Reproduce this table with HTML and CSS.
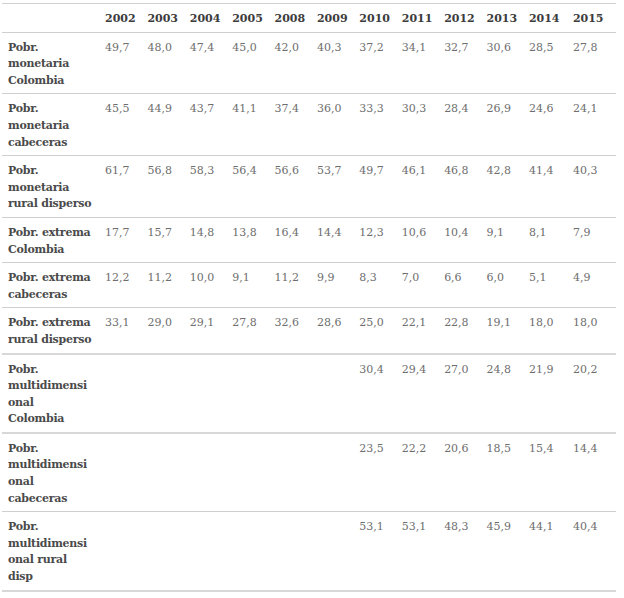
FILE: index.html
```html
<!DOCTYPE html>
<html lang="es">
<head>
<meta charset="utf-8">
<title>Pobreza Colombia</title>
<link rel="stylesheet" href="styles.css">
</head>
<body>
<table class="data">
  <colgroup>
    <col class="c-label">
    <col class="c-year"><col class="c-year"><col class="c-year"><col class="c-year"><col class="c-year">
    <col class="c-year"><col class="c-year"><col class="c-year"><col class="c-year"><col class="c-year">
    <col class="c-wide"><col class="c-last">
  </colgroup>
  <thead>
    <tr>
      <th></th><th>2002</th><th>2003</th><th>2004</th><th>2005</th><th>2008</th><th>2009</th><th>2010</th><th>2011</th><th>2012</th><th>2013</th><th>2014</th><th>2015</th>
    </tr>
  </thead>
  <tbody>
    <tr><th>Pobr. monetaria Colombia</th><td>49,7</td><td>48,0</td><td>47,4</td><td>45,0</td><td>42,0</td><td>40,3</td><td>37,2</td><td>34,1</td><td>32,7</td><td>30,6</td><td>28,5</td><td>27,8</td></tr>
    <tr><th>Pobr. monetaria cabeceras</th><td>45,5</td><td>44,9</td><td>43,7</td><td>41,1</td><td>37,4</td><td>36,0</td><td>33,3</td><td>30,3</td><td>28,4</td><td>26,9</td><td>24,6</td><td>24,1</td></tr>
    <tr><th>Pobr. monetaria rural disperso</th><td>61,7</td><td>56,8</td><td>58,3</td><td>56,4</td><td>56,6</td><td>53,7</td><td>49,7</td><td>46,1</td><td>46,8</td><td>42,8</td><td>41,4</td><td>40,3</td></tr>
    <tr><th>Pobr. extrema Colombia</th><td>17,7</td><td>15,7</td><td>14,8</td><td>13,8</td><td>16,4</td><td>14,4</td><td>12,3</td><td>10,6</td><td>10,4</td><td>9,1</td><td>8,1</td><td>7,9</td></tr>
    <tr><th>Pobr. extrema cabeceras</th><td>12,2</td><td>11,2</td><td>10,0</td><td>9,1</td><td>11,2</td><td>9,9</td><td>8,3</td><td>7,0</td><td>6,6</td><td>6,0</td><td>5,1</td><td>4,9</td></tr>
    <tr><th>Pobr. extrema rural disperso</th><td>33,1</td><td>29,0</td><td>29,1</td><td>27,8</td><td>32,6</td><td>28,6</td><td>25,0</td><td>22,1</td><td>22,8</td><td>19,1</td><td>18,0</td><td>18,0</td></tr>
    <tr><th>Pobr.<br>multidimensi<br>onal<br>Colombia</th><td></td><td></td><td></td><td></td><td></td><td></td><td>30,4</td><td>29,4</td><td>27,0</td><td>24,8</td><td>21,9</td><td>20,2</td></tr>
    <tr><th>Pobr.<br>multidimensi<br>onal<br>cabeceras</th><td></td><td></td><td></td><td></td><td></td><td></td><td>23,5</td><td>22,2</td><td>20,6</td><td>18,5</td><td>15,4</td><td>14,4</td></tr>
    <tr><th>Pobr.<br>multidimensi<br>onal rural<br>disp</th><td></td><td></td><td></td><td></td><td></td><td></td><td>53,1</td><td>53,1</td><td>48,3</td><td>45,9</td><td>44,1</td><td>40,4</td></tr>
  </tbody>
</table>
</body>
</html>
```
FILE: styles.css
```css
html, body {
  margin: 0;
  padding: 0;
  background: #ffffff;
}

body {
  padding: 3px 0 0 2px;
  font-family: "DejaVu Serif", "Liberation Serif", serif;
  font-size: 11px;
  line-height: 16.6px;
}

.data {
  border-collapse: collapse;
  table-layout: fixed;
  width: 614px;
  border-top: 1px solid #d2d2d2;
}

.c-label { width: 97px; }
.c-year { width: 42.4px; }
.c-wide { width: 44px; }
.c-last { width: 49px; }

.data th,
.data td {
  padding: 7px 6px 4px 6px;
  text-align: left;
  vertical-align: top;
  border-bottom: 1px solid #cfcfcf;
  overflow: hidden;
}

.data thead th {
  padding: 7px 6px 4px 6px;
  color: #3c3c3c;
  font-weight: bold;
  vertical-align: middle;
}

.data tbody th {
  padding-right: 0;
  color: #4a4a4a;
  font-weight: bold;
  letter-spacing: -0.25px;
}

.data td {
  color: #6e6e6e;
  font-weight: normal;
}

.data tbody tr:nth-child(6) th,
.data tbody tr:nth-child(6) td,
.data tbody tr:nth-child(7) th,
.data tbody tr:nth-child(7) td,
.data tbody tr:nth-child(9) th,
.data tbody tr:nth-child(9) td {
  border-bottom: 2px solid #d8d8d8;
}
```
